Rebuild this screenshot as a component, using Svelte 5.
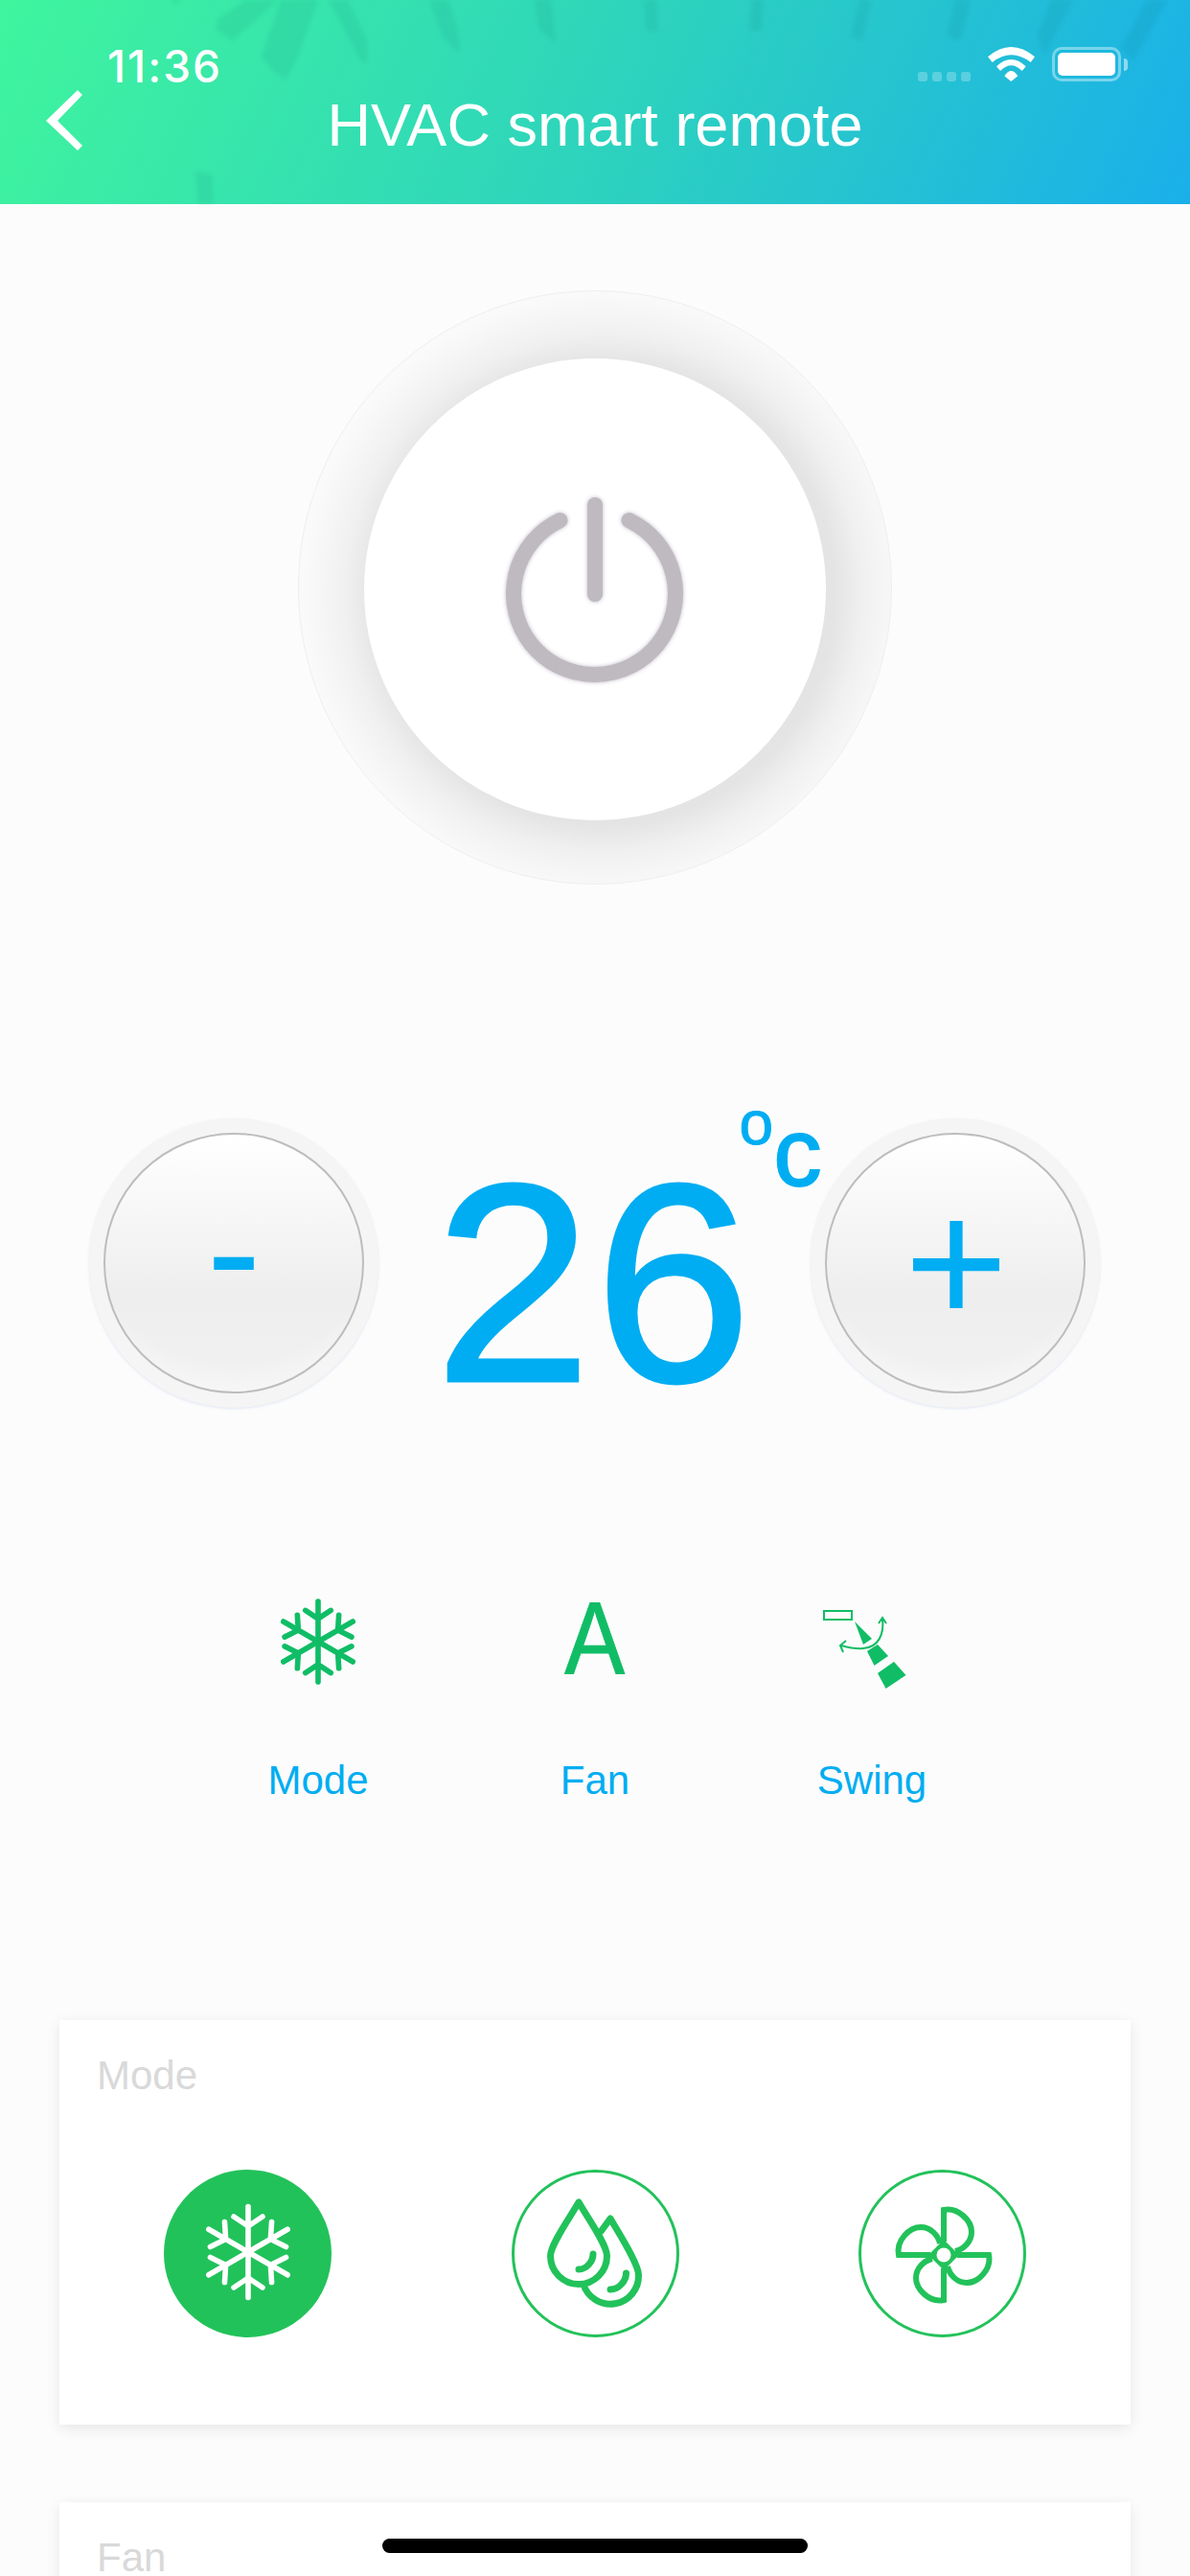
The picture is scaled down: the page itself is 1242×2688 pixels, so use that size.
<script>
	const arms = [0, 60, 120, 180, 240, 300];
	const blades = [0, 90, 180, 270];
	const shards = [
		'227,20 257,0 290,0 242,43 225,30',
		'273,60 293,0 332,0 308,65 298,83 287,75',
		'343,0 363,0 383,43 383,65 377,63',
		'448,0 468,0 477,30 480,55 463,40',
		'177,0 190,0 183,5',
		'204,178 222,183 222,213 207,213',
		'558,0 575,0 580,45 563,30',
		'672,0 685,0 687,33 675,32',
		'785,0 797,0 795,32 782,32',
		'897,0 909,0 900,43 888,38',
		'997,0 1013,0 1002,42 988,37',
		'1097,0 1120,0 1090,57 1083,37',
		'1197,0 1218,0 1183,63 1170,50'
	];
</script>

{#snippet flake(cls)}
	<svg class={cls} viewBox="-44 -51 88 102">
		{#each arms as a}
			<g transform="rotate({a})">
				<path d="M0 0V-47.5M-15 -37L0 -27L15 -37" />
			</g>
		{/each}
	</svg>
{/snippet}

<div class="screen">
	<header class="header">
		<svg class="shards" viewBox="0 0 1242 213">
			{#each shards as p}
				<polygon points={p} />
			{/each}
		</svg>

		<div class="status">
			<span class="time">11:36</span>
			<div class="signal">
				<i></i><i></i><i></i><i></i>
			</div>
			<svg class="wifi" viewBox="0 0 49 36">
				<path d="M0 10.3Q24.3 -10.3 49 10.3L44.7 16Q24.3 .6 4.7 16Z" />
				<path d="M9 20.3Q24.3 5.7 39.7 20.3L35.7 25Q24.3 13.6 13 25Z" />
				<path d="M17.3 30.3Q24.3 19.7 31.3 30.3L24.3 36Z" />
			</svg>
			<div class="battery"><b></b></div>
			<div class="nub"></div>
		</div>

		<div class="titlebar">
			<svg class="back" viewBox="0 0 40 65">
				<polygon points="0,32 33,0 38,5 12,32 38,58 33,63" />
			</svg>
			<h1>HVAC smart remote</h1>
		</div>
	</header>

	<section class="power">
		<div class="power-ring">
			<div class="power-disc">
				<svg class="power-icon" viewBox="0 0 200 210">
					<path d="M64.5 35A84.5 84.5 0 1 0 136.5 35" />
					<path d="M101 19V112" />
				</svg>
			</div>
		</div>
	</section>

	<section class="temp-row">
		<div class="round"><div class="round-in minus">-</div></div>
		<div class="temp">
			<span class="value">26</span>
			<span class="deg">o</span>
			<span class="unit">c</span>
		</div>
		<div class="round"><div class="round-in plus">+</div></div>
	</section>

	<section class="features">
		<div class="feature">
			<div class="feature-icon">{@render flake('flake-green')}</div>
			<span>Mode</span>
		</div>
		<div class="feature">
			<div class="feature-icon"><em class="fan-auto">A</em></div>
			<span>Fan</span>
		</div>
		<div class="feature">
			<div class="feature-icon">
				<svg class="swing" viewBox="0 -7 110 100">
					<rect x="5" y="6" width="29" height="9" class="line" />
					<polygon points="37,17 55,35 46,41" />
					<polygon points="61,41 72,53 57.5,63 50,48" />
					<polygon points="78,59 90.5,73 69.6,87 61,71" />
					<path class="line" d="M66 14C68 30 62 44 46 45C38 46 30 44 23 42M62 19L66 13L70 19M28 37L22 42L25 49" />
				</svg>
			</div>
			<span>Swing</span>
		</div>
	</section>

	<section class="card">
		<h2>Mode</h2>
		<div class="options">
			<div class="option active">{@render flake('flake-white')}</div>
			<div class="option">
				<svg class="drops" viewBox="0 0 175 175">
					<path d="M70 34C62 48 40.5 78 40.5 90A29.5 29.5 0 0 0 99.5 90C99.5 78 78 48 70 34Z" />
					<path d="M85 88C85 96 78 104 70 104" />
					<path d="M93.5 64L103 51C111 65 132.5 98 132.5 110A29.5 29.5 0 0 1 75 120" />
					<path d="M119.5 108C119.5 116 112 125 103 125" />
				</svg>
			</div>
			<div class="option">
				<svg class="fan" viewBox="-60 -60 120 120">
					<polygon class="hub" points="0,-16 16,0 0,16 -16,0" />
					<circle cx="0" cy="0" r="7.5" />
					{#each blades as a}
						<path transform="rotate({a})" d="M0 -14V-47C15 -50 29 -36 29 -24C29 -14 21 -6 12 -4" />
					{/each}
				</svg>
			</div>
		</div>
	</section>

	<section class="card">
		<h2>Fan</h2>
	</section>

	<div class="home"></div>
</div>

<style>
	:global(body) {
		margin: 0;
		background: #fcfcfc;
	}

	.screen {
		position: relative;
		width: 1242px;
		height: 2688px;
		overflow: hidden;
		background: #fcfcfc;
		font-family: 'Liberation Sans', Arial, sans-serif;
	}

	.header {
		position: relative;
		height: 213px;
		color: #fff;
		background: linear-gradient(115deg, #3ff59d 0%, #2dd3bd 52%, #1aafea 100%);
	}

	.shards {
		position: absolute;
		inset: 0;
		width: 1242px;
		height: 213px;
		filter: blur(2px);
	}

	.shards polygon {
		fill: rgba(0, 90, 90, 0.08);
	}

	.status {
		position: relative;
		display: flex;
		align-items: flex-start;
		height: 94px;
		padding: 49px 65px 0 112px;
		box-sizing: border-box;
	}

	.time {
		margin-right: auto;
		font-family: Inter, sans-serif;
		font-size: 46px;
		font-weight: 500;
		letter-spacing: 2px;
		line-height: 40px;
	}

	.signal {
		display: flex;
		gap: 5px;
		margin: 26px 18px 0 0;
	}

	.signal i {
		width: 10px;
		height: 10px;
		border-radius: 3px;
		background: rgba(255, 255, 255, 0.25);
	}

	.wifi {
		width: 49px;
		height: 36px;
		margin-right: 18px;
		fill: #fff;
	}

	.battery {
		width: 72px;
		height: 36px;
		padding: 3px;
		box-sizing: border-box;
		border: 3px solid rgba(255, 255, 255, 0.4);
		border-radius: 10px;
	}

	.battery b {
		display: block;
		height: 100%;
		border-radius: 5px;
		background: #fff;
	}

	.nub {
		width: 4px;
		height: 13px;
		margin: 12px 0 0 3px;
		border-radius: 0 7px 7px 0;
		background: rgba(255, 255, 255, 0.5);
	}

	.titlebar {
		position: relative;
		height: 119px;
	}

	.back {
		position: absolute;
		left: 48px;
		top: 0;
		width: 40px;
		height: 65px;
		fill: #fff;
	}

	h1 {
		margin: 0;
		text-align: center;
		font-size: 63px;
		font-weight: 400;
		line-height: 72px;
	}

	.power {
		display: flex;
		justify-content: center;
		padding-top: 90px;
	}

	.power-ring {
		display: flex;
		align-items: center;
		justify-content: center;
		width: 620px;
		height: 620px;
		box-sizing: border-box;
		border: 1px solid #efefef;
		border-radius: 50%;
		overflow: hidden;
		background: radial-gradient(circle at 51.5% 51%, #e4e4e4 0 241px, #f0f0f0 270px, #f6f6f6 295px, #fafafa 315px);
	}

	.power-disc {
		display: flex;
		align-items: center;
		justify-content: center;
		width: 482px;
		height: 482px;
		margin-top: 3px;
		border-radius: 50%;
		background: #fff;
	}

	.power-icon {
		width: 200px;
		height: 210px;
		margin: -4px 0 0 -2px;
		fill: none;
		stroke: #bfbac0;
		stroke-width: 16;
		stroke-linecap: round;
		filter: drop-shadow(0 0 2px rgba(110, 100, 130, 0.45));
	}

	.temp-row {
		display: flex;
		justify-content: space-between;
		align-items: center;
		margin: 244px 94px 0 93px;
	}

	.round {
		display: flex;
		align-items: center;
		justify-content: center;
		width: 302px;
		height: 302px;
		border-radius: 50%;
		background: #f5f5f5;
		box-shadow: 0 1px 3px rgba(160, 180, 220, 0.3);
	}

	.round-in {
		display: flex;
		align-items: center;
		justify-content: center;
		width: 272px;
		height: 272px;
		box-sizing: border-box;
		border: 2px solid #bdbdbd;
		border-radius: 50%;
		color: #00adf2;
		line-height: 1;
		background:
			radial-gradient(circle at 50% 30%, transparent 68%, rgba(255, 255, 255, 0.9) 100%),
			linear-gradient(#fff 0%, #f7f7f7 30%, #eee 62%, #f1f1f1 100%);
	}

	.minus {
		font-size: 170px;
		padding-bottom: 27px;
	}

	.plus {
		font-size: 185px;
		padding: 0 0 1px 2px;
	}

	.temp {
		position: relative;
		height: 302px;
		color: #00adf2;
	}

	.value {
		display: block;
		padding-top: 25px;
		font-size: 295px;
		letter-spacing: 3px;
		line-height: 1;
		-webkit-text-stroke: 3px #00adf2;
	}

	.deg,
	.unit {
		position: absolute;
		line-height: 1;
	}

	.deg {
		left: 318px;
		top: -27px;
		font-size: 64px;
		-webkit-text-stroke: 1px #00adf2;
	}

	.unit {
		left: 354px;
		top: -15px;
		font-size: 100px;
		-webkit-text-stroke: 2px #00adf2;
	}

	.features {
		display: grid;
		grid-template-columns: repeat(3, 289px);
		justify-content: center;
		margin-top: 199px;
	}

	.feature {
		display: flex;
		flex-direction: column;
		align-items: center;
		color: #00adf2;
		font-size: 42px;
		line-height: 48px;
	}

	.feature-icon {
		display: flex;
		justify-content: center;
		align-items: flex-start;
		height: 100px;
		margin-bottom: 66px;
	}

	.flake-green,
	.flake-white {
		fill: none;
		stroke-linecap: round;
		stroke-linejoin: round;
	}

	.flake-green {
		width: 78px;
		height: 90px;
		stroke: #10bd66;
		stroke-width: 6.4;
	}

	.flake-white {
		width: 88px;
		height: 102px;
		margin-bottom: 3px;
		stroke: #fff;
		stroke-width: 5.6;
	}

	.fan-auto {
		color: #10bd66;
		font-style: normal;
		font-size: 107px;
		line-height: 84px;
		transform: scaleX(0.88);
		-webkit-text-stroke: 1px #10bd66;
	}

	.swing {
		width: 110px;
		height: 100px;
		fill: #10bd66;
	}

	.swing .line {
		fill: none;
		stroke: #10bd66;
		stroke-width: 2;
	}

	.card {
		margin: 226px 62px 0;
		padding: 34px 39px 91px;
		background: #fff;
		box-shadow: 0 4px 14px rgba(0, 0, 0, 0.09);
	}

	.card + .card {
		margin-top: 81px;
		height: 400px;
	}

	h2 {
		margin: 0;
		color: #d9d9d9;
		font-size: 42px;
		font-weight: 400;
		line-height: 48px;
	}

	.options {
		display: flex;
		justify-content: space-between;
		margin: 74px 70px 0;
	}

	.option {
		display: flex;
		align-items: center;
		justify-content: center;
		width: 175px;
		height: 175px;
		box-sizing: border-box;
		border: 3px solid #22c25a;
		border-radius: 50%;
	}

	.option.active {
		background: #22c25a;
	}

	.drops {
		flex: none;
		width: 175px;
		height: 175px;
		fill: none;
		stroke: #22c25a;
		stroke-width: 7;
		stroke-linecap: round;
		stroke-linejoin: round;
	}

	.fan {
		flex: none;
		width: 120px;
		height: 120px;
		margin: 2px 0 0 3px;
		fill: none;
		stroke: #22c25a;
		stroke-width: 6;
	}

	.fan .hub {
		fill: #22c25a;
		stroke: none;
	}

	.fan circle {
		fill: #fff;
		stroke: none;
	}

	.home {
		position: absolute;
		left: 399px;
		top: 2649px;
		width: 444px;
		height: 15px;
		border-radius: 8px;
		background: #000;
	}
</style>
